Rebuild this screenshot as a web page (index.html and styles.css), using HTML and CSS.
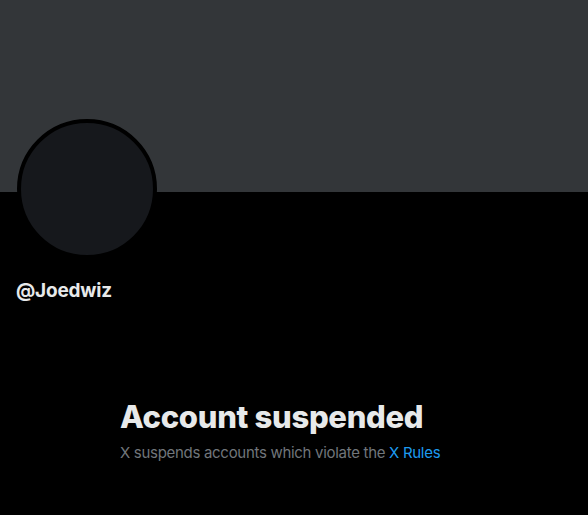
FILE: index.html
```html
<!DOCTYPE html>
<html>
<head>
<meta charset="utf-8">
<link rel="stylesheet" href="styles.css">
</head>
<body>
<div class="page">
  <div class="banner"></div>
  <div class="profile">
    <div class="avatar"></div>
    <div class="handle">@Joedwiz</div>
  </div>
  <div class="empty">
    <h1 class="title">Account suspended</h1>
    <p class="desc">X suspends accounts which violate the <a class="link" href="#">X Rules</a></p>
  </div>
</div>
</body>
</html>
```
FILE: styles.css
```css
html, body {
  margin: 0;
  padding: 0;
  background: #000;
}
.page {
  width: 588px;
  height: 515px;
  overflow: hidden;
  background: #000;
  font-family: Inter, "Liberation Sans", sans-serif;
}
.banner {
  height: 192px;
  background: #333639;
}
.profile {
  padding: 0 16px;
  margin-top: -73px;
  display: flex;
  flex-direction: column;
}
.avatar {
  width: 132px;
  height: 132px;
  border-radius: 50%;
  background: #16181c;
  border: 4px solid #000;
  margin-left: 1px;
}
.handle {
  margin-top: 20px;
  color: #e7e9ea;
  font-weight: 700;
  font-size: 19px;
  line-height: 24px;
  letter-spacing: -0.2px;
}
.empty {
  padding-left: 120px;
  margin-top: 96px;
}
.title {
  margin: 0;
  color: #e7e9ea;
  font-weight: 800;
  font-size: 31px;
  line-height: 36px;
  letter-spacing: -0.3px;
}
.desc {
  margin: 8px 0 0;
  color: #71767b;
  font-size: 15px;
  line-height: 20px;
  letter-spacing: -0.3px;
}
.link {
  color: #1d9bf0;
  text-decoration: none;
}
```
